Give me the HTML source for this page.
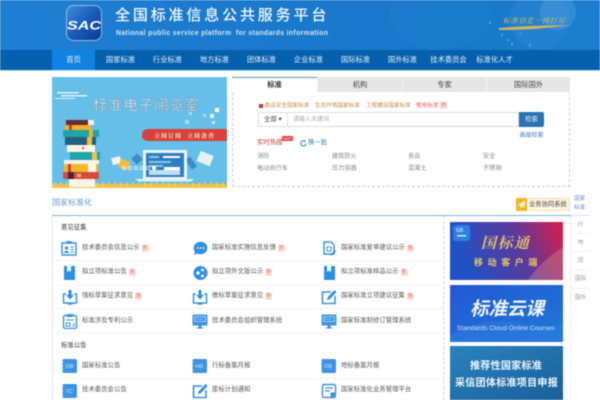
<!DOCTYPE html>
<html lang="zh"><head><meta charset="utf-8"><title>全国标准信息公共服务平台</title>
<style>
html,body{margin:0;padding:0;background:#fff}
body{width:600px;height:400px;overflow:hidden;position:relative;font-family:"Liberation Sans","Noto Sans CJK SC",sans-serif;color:#555}
#w{position:absolute;left:0;top:0;width:600px;height:400px;overflow:hidden;filter:blur(.42px)}
#w div,#w span,#w svg{position:absolute;white-space:nowrap}
.n{top:50px;height:20px;line-height:20px;font-size:7.3px;color:#e8f2fb;width:47px;text-align:center}
.tab{top:77px;height:15px;line-height:15px;text-align:center;font-size:7.3px;color:#444;background:#e6e6e6;border-left:1px solid #f4f4f4;box-sizing:border-box}
.t{font-size:6.4px;line-height:10px;color:#555}
.x{display:inline-block;position:static!important;width:7px;height:7px;line-height:7px;background:#fbdada;color:#e77;font-size:5px;text-align:center;margin-left:2px;vertical-align:0;font-style:normal}
.l{height:1px;background:#f1f1f1;left:53px;width:389px}
.h{font-size:6.2px;line-height:10px;color:#888}
.s{left:571px;width:19px;text-align:center;font-size:5.6px;color:#999;line-height:10px}
.sl{left:571px;width:19px;height:1px;background:#eee}
.i{width:16px;height:16px}
</style></head><body><div id="w">

<div style="left:0;top:0;width:600px;height:50px;background:linear-gradient(90deg,#1f7fd2 0%,#1b79cc 50%,#1878c8 75%,#1c7fce 100%)"></div>
<svg style="left:380px;top:0" width="220" height="50" viewBox="0 0 220 50">
<ellipse cx="60" cy="15" rx="50" ry="35" fill="#2585d4" opacity=".3"/>
<circle cx="160" cy="20" r="30" fill="#2a88d6" opacity=".5"/>
<circle cx="178" cy="12" r="18" fill="#5ea6e0" opacity=".35"/>
<g fill="#58d0f5"><circle cx="110" cy="23" r=".9"/><circle cx="122" cy="35" r=".9"/><circle cx="132" cy="44" r=".9"/><circle cx="150" cy="45" r=".9"/><circle cx="128" cy="40" r=".8"/><circle cx="140" cy="34" r=".7"/></g>
<path d="M119 28 Q150 25 190 25.5 L155 29 Q135 30 119 30Z" fill="#d2b35a"/>
<text x="123" y="23" font-size="7" font-style="italic" fill="#e4c25e" font-family="Liberation Serif,Noto Serif CJK SC,serif" letter-spacing=".8">标准信息一网打尽</text>
</svg>
<svg style="left:65px;top:4px" width="39" height="39" viewBox="0 0 39 39">
<defs><linearGradient id="lg" x1="0" y1="0" x2="1" y2="1"><stop offset="0" stop-color="#3f8fdc"/><stop offset=".5" stop-color="#1a5cb8"/><stop offset="1" stop-color="#0a3a96"/></linearGradient></defs>
<rect x="1.5" y="1.5" width="35" height="35" rx="7" fill="url(#lg)" stroke="#8dbce4" stroke-width="1"/>
<text x="2" y="25.5" font-size="12" font-weight="bold" font-style="italic" fill="#fff" font-family="Liberation Sans,sans-serif" textLength="34" lengthAdjust="spacingAndGlyphs">SAC</text>
</svg>
<div style="left:115px;top:6px;font-size:15px;line-height:20px;letter-spacing:2.85px;color:#f1f7fc;font-weight:500">全国标准信息公共服务平台</div>
<div style="left:116px;top:29px;font-size:6.9px;line-height:10px;font-weight:bold;color:#cfe4f6;letter-spacing:.34px">National public service platform&nbsp; for standards information</div>

<div style="left:0;top:50px;width:600px;height:20px;background:#0560ad"></div>
<div style="left:52px;top:50px;width:43px;height:20px;background:#0f83e2"></div>
<div class="n" style="left:50px">首页</div>
<div class="n" style="left:97px">国家标准</div>
<div class="n" style="left:144px">行业标准</div>
<div class="n" style="left:191px">地方标准</div>
<div class="n" style="left:238px">团体标准</div>
<div class="n" style="left:285px">企业标准</div>
<div class="n" style="left:332px">国际标准</div>
<div class="n" style="left:379px">国外标准</div>
<div class="n" style="left:425px">技术委员会</div>
<div class="n" style="left:471px">标准化人才</div>
<div style="left:0;top:70px;width:600px;height:1px;background:#b9daf2"></div>

<svg style="left:52px;top:77px" width="175" height="111" viewBox="0 0 175 111">
<rect width="175" height="111" fill="#66bfe9"/>
<g fill="#dff1fa"><rect x="5" y="15" width="22" height="1.5"/><rect x="9" y="18" width="26" height="1.5"/><rect x="3" y="21" width="20" height="1"/></g>
<text x="41" y="33" font-size="14.2" letter-spacing="1.1" fill="#eef7fb" stroke="#5f7f98" stroke-width=".35" font-family="Liberation Sans,Noto Sans CJK SC,sans-serif">标准电子阅览室</text>
<g fill="#a6dcf2"><rect x="133" y="43" width="4" height="4"/><rect x="137" y="35" width="3" height="3"/><rect x="151" y="37" width="3" height="3"/></g>
<rect x="158" y="37" width="4" height="4" fill="#e8f7fd"/><rect x="163" y="31" width="4" height="4" fill="#fff"/><rect x="160" y="44" width="3" height="3" fill="#c4e8f7"/>
<path d="M97 64 Q90 64 90 58 Q90 52 97 52 H175 V64Z" fill="#d9413c"/>
<text x="102" y="61" font-size="6" font-weight="bold" fill="#f9e8b8" letter-spacing="1" font-family="Liberation Serif,Noto Serif CJK SC,serif">立阅订阅 &nbsp;立阅备查</text>
<!-- books -->
<rect x="14" y="43" width="28" height="5" fill="#6d2a35"/><rect x="36" y="43" width="6" height="5" fill="#f3f0e6"/>
<rect x="13" y="48" width="26" height="5" fill="#f0b428"/><rect x="17" y="48" width="3" height="5" fill="#d63f38"/>
<rect x="11" y="53" width="36" height="7" fill="#1fa5a8"/><rect x="37" y="53" width="4" height="7" fill="#f0b428"/>
<rect x="13" y="60" width="31" height="8" fill="#255f80"/><rect x="35" y="60" width="5" height="8" fill="#f2bc36"/>
<rect x="15" y="68" width="28" height="7" fill="#fbf7e8"/><rect x="30" y="70" width="2" height="2" fill="#d63f38"/>
<rect x="18" y="75" width="30" height="8" fill="#1fa5a8"/><rect x="40" y="75" width="5" height="8" fill="#f0c040"/>
<rect x="12" y="83" width="35" height="4" fill="#f7f3e8"/>
<rect x="12" y="87" width="34" height="8" fill="#f4b72a"/><rect x="36" y="87" width="8" height="8" fill="#f8f4e6"/><rect x="16" y="87" width="3" height="8" fill="#d63f38"/>
<rect x="11" y="95" width="36" height="7" fill="#d84a3e"/><rect x="16" y="95" width="6" height="7" fill="#4a2433"/><rect x="25" y="97" width="4" height="3" fill="#f0c040"/>
<!-- floating -->
<g transform="rotate(-15 65 84)"><rect x="60" y="80" width="9" height="7" fill="#f1f5ee"/></g>
<g transform="rotate(20 72 88)"><rect x="67" y="83" width="10" height="9" fill="#efbd44"/></g>
<g transform="rotate(-40 85 82)"><rect x="81" y="78" width="8" height="8" fill="#3d88c9"/></g>
<g transform="rotate(-35 139 86)"><rect x="136" y="80" width="6" height="12" fill="#3d88c9"/></g>
<g transform="rotate(22 153 82)"><rect x="146" y="76" width="14" height="11" fill="#e6f2f2"/></g>
<!-- laptop -->
<rect x="91" y="73" width="44" height="29" rx="1" fill="#e8f5fb"/>
<rect x="94" y="76" width="38" height="24" fill="#2d7fbf"/>
<rect x="97" y="79" width="10" height="2" fill="#8dc6e8"/><rect x="111" y="79" width="17" height="2" fill="#fff"/>
<rect x="97" y="84" width="22" height="2" fill="#8dc6e8"/><rect x="97" y="88" width="14" height="2" fill="#8dc6e8"/>
<rect x="97" y="93" width="31" height="5" fill="#bfe0f2"/><rect x="112" y="90" width="16" height="3" fill="#fff"/>
<path d="M83 102 H142 L139 104.500 H87Z" fill="#dff0f8"/>
<g fill="none" stroke="#fff" stroke-width=".7"><circle cx="72" cy="91" r="1.6"/><circle cx="78" cy="91" r="1.6"/><circle cx="84" cy="91" r="1.6"/><circle cx="90" cy="91" r="1.6"/><circle cx="96" cy="91" r="1.6"/></g><circle cx="102" cy="91" r="2.2" fill="#fff"/>
<path d="M0 111V108l3-3 3 3 3-3 3 3 3-3 3 3 3-3 3 3 3-3 3 3 3-3 3 3 3-3 3 3 3-3 3 3 3-3 3 3 3-3 3 3 3-3 3 3 3-3 3 3 3-3 3 3 3-3 3 3 3-3 3 3 3-3 3 3 3-3 3 3 3-3 3 3 3-3 3 3 3-3 3 3 3-3 3 3 3-3 3 3 3-3 3 3 3-3 3 3 3-3 3 3 3-3 3 3 3-3 3 3 3-3 3 3 3-3 3 3 3-3 3 3V111Z" fill="#f3c34a"/>
<rect x="17" y="102" width="26" height="8" fill="#f8f4e6"/>
</svg>

<div style="left:232px;top:77px;width:338px;height:110px;box-sizing:border-box;border:1px dashed #ccc;border-top:0"></div>
<div style="left:232px;top:77px;width:85px;height:1px;background:#5f8fb0"></div>
<div class="tab" style="left:232px;width:85px;background:#fff;border:0;color:#333;font-weight:bold;top:78px;height:14px;line-height:13px">标准</div>
<div class="tab" style="left:317px;width:85px">机构</div>
<div class="tab" style="left:402px;width:84px">专家</div>
<div class="tab" style="left:486px;width:84px">国际国外</div>

<div style="left:259px;top:104px;width:3.5px;height:3.5px;background:#c8313a"></div>
<div style="left:264.500px;top:101px;font-size:5.6px;line-height:10px;color:#c98a3f">食品安全国家标准</div>
<div style="left:315px;top:101px;font-size:5.6px;line-height:10px;color:#c98a3f">生态环境国家标准</div>
<div style="left:366px;top:101px;font-size:5.6px;line-height:10px;color:#c98a3f">工程建设国家标准</div>
<div style="left:416px;top:101px;font-size:5.6px;line-height:10px;color:#e2645f">使用标准</div>
<div style="left:440px;top:102px;width:7px;height:7px;line-height:7px;background:#fbdada;color:#e77;font-size:5px;text-align:center">新</div>

<div style="left:258px;top:112px;width:261px;height:15px;box-sizing:border-box;border:1px solid #ddd;border-radius:2px 0 0 2px"></div>
<div style="left:287px;top:113px;width:1px;height:13px;background:#ddd"></div>
<div style="left:264px;top:115px;font-size:6.4px;line-height:10px;color:#444">全部 ▾</div>
<div style="left:293px;top:115px;font-size:6px;line-height:10px;color:#aaa">请输入关键词</div>
<div style="left:519px;top:112px;width:25px;height:15px;line-height:15px;text-align:center;background:#2b72b0;border-radius:0 2px 2px 0;color:#e8f2fb;font-size:6.4px">检索</div>
<div style="left:519px;top:131px;width:25px;text-align:center;font-size:6px;line-height:10px;color:#3b7ab3">高级检索</div>

<div style="left:257px;top:138px;font-size:6.4px;line-height:10px;color:#c0453f">实时热搜</div>
<div style="left:282px;top:136px;width:11px;height:5px;line-height:5px;background:#ea3c48;color:#fff;font-size:4px;text-align:center">HOT</div>
<svg style="left:300px;top:140px" width="7" height="7" viewBox="0 0 7 7"><path d="M6 3.5A2.6 2.6 0 1 1 4.8 1.2" fill="none" stroke="#3a7fc0" stroke-width="1"/><path d="M4 0L6 1.4 4 2.4Z" fill="#3a7fc0"/></svg>
<div style="left:308px;top:138px;font-size:6.4px;line-height:10px;color:#3b7ab3">换一批</div>
<div class="h" style="left:257px;top:152px">消防</div>
<div class="h" style="left:332px;top:152px">建筑防火</div>
<div class="h" style="left:408px;top:152px">食品</div>
<div class="h" style="left:483px;top:152px">安全</div>
<div class="h" style="left:257px;top:164px">电动自行车</div>
<div class="h" style="left:332px;top:164px">压力容器</div>
<div class="h" style="left:408px;top:164px">混凝土</div>
<div class="h" style="left:483px;top:164px">不锈钢</div>

<div style="left:52px;top:198px;font-size:8px;line-height:10px;color:#6a9cc6">国家标准化</div>
<div style="left:516px;top:198px;width:54px;height:13px;box-sizing:border-box;border:1px solid #f6dfae;background:#fdf5e4;border-radius:1px"></div>
<div style="left:516px;top:198px;width:11px;height:13px;background:#f7b81f"></div>
<svg style="left:517px;top:200px" width="9" height="9" viewBox="0 0 9 9"><path d="M8 1L1 4.5 3.2 5.5 3.7 8 5 6.3 7 7Z" fill="#fff"/></svg>
<div style="left:529px;top:200px;font-size:6.3px;line-height:10px;color:#444">业务协同系统</div>

<div style="left:574px;top:195px;font-size:5.6px;line-height:9px;color:#6a8fd0;white-space:normal;width:12px">国家标准</div>
<div class="sl" style="top:215px;background:#e3e3e3"></div>
<div class="s" style="top:220px">行</div><div class="sl" style="top:233px"></div>
<div class="s" style="top:238px">地</div><div class="sl" style="top:251px"></div>
<div class="s" style="top:256px">团</div><div class="sl" style="top:270px"></div>
<div class="s" style="top:274px">国际</div><div class="sl" style="top:288px"></div>
<div class="s" style="top:293px">国外</div>
<div style="left:570px;top:215px;width:1px;height:185px;background:#ececec"></div>

<div style="left:52px;top:215px;width:519px;height:1px;background:#7fb0d4"></div>
<div style="left:52px;top:216px;width:1px;height:184px;background:#eaeaea"></div>
<div style="left:443px;top:216px;width:0;height:184px;border-left:1px dashed #d6d6d6"></div>

<div style="left:61px;top:223px;font-size:6.4px;line-height:10px;color:#333">意见征集</div>
<div class="l" style="top:260px"></div><div class="l" style="top:285px"></div><div class="l" style="top:308px"></div><div class="l" style="top:333px"></div><div class="l" style="top:378px"></div>

<!-- row 1 -->
<svg class="i" style="left:61px;top:240px" viewBox="0 0 16 16"><rect x="1" y="3" width="14" height="12" fill="#fff" stroke="#3c93e2" stroke-width="1.5"/><rect x="5.500" y="1" width="5" height="3" fill="#3c93e2"/><circle cx="5.500" cy="8" r="1.7" fill="#3c93e2"/><path d="M3 13c0-3 5-3 5 0Z" fill="#3c93e2"/><path d="M9.500 7H13M9.500 9.500H13M9.500 12H13" stroke="#3c93e2"/></svg>
<div class="t" style="left:82px;top:243px">技术委员会信息公示<i class="x">新</i></div>
<svg class="i" style="left:192px;top:240px" viewBox="0 0 16 16"><ellipse cx="8.500" cy="8" rx="6.800" ry="6.300" fill="#2f8fe6"/><path d="M3 11L2 15 6 13Z" fill="#2f8fe6"/><circle cx="5.500" cy="8" r=".9" fill="#fff"/><circle cx="8.500" cy="8" r=".9" fill="#fff"/><circle cx="11.500" cy="8" r=".9" fill="#fff"/></svg>
<div class="t" style="left:212px;top:243px">国家标准实施信息反馈<i class="x">新</i></div>
<svg class="i" style="left:321px;top:240px" viewBox="0 0 16 16"><path d="M3 2H10L13 5V14H3Z" fill="#fff" stroke="#3c93e2" stroke-width="1.5"/><path d="M6 7H10V11H6Z" fill="none" stroke="#3c93e2"/><path d="M9 15L14 10 15 11.500 11 15.500Z" fill="#3c93e2"/></svg>
<div class="t" style="left:341px;top:243px">国家标准复审建议公示<i class="x">新</i></div>
<!-- row 2 -->
<svg class="i" style="left:61px;top:265px" viewBox="0 0 16 16"><path d="M3 1H6V7L8 5.500 10 7V1H14V15H3Z" fill="#2f8fe6"/></svg>
<div class="t" style="left:82px;top:267px">拟立项标准公告<i class="x">新</i></div>
<svg class="i" style="left:192px;top:265px" viewBox="0 0 16 16"><circle cx="8.500" cy="8" r="7" fill="#2f8fe6"/><circle cx="6" cy="8" r="1.7" fill="#fff"/><circle cx="10.500" cy="5" r="1.4" fill="#fff"/><circle cx="10.500" cy="11" r="1.4" fill="#fff"/></svg>
<div class="t" style="left:212px;top:267px">拟立项外文版公示<i class="x">新</i></div>
<svg class="i" style="left:321px;top:265px" viewBox="0 0 16 16"><path d="M3 1H6V7L8 5.500 10 7V1H14V15H3Z" fill="#2f8fe6"/></svg>
<div class="t" style="left:341px;top:267px">拟立项标准样品公示<i class="x">新</i></div>
<!-- row 3 -->
<svg class="i" style="left:62px;top:289px" viewBox="0 0 16 16"><path d="M4 5H1.500V14H14.500V5H12" fill="none" stroke="#3c93e2" stroke-width="1.5"/><path d="M6.500 1H9.500V6H12L8 10.500 4 6H6.500Z" fill="#2f8fe6"/><rect x="5.500" y="14.500" width="5" height="1.200" fill="#3c93e2"/></svg>
<div class="t" style="left:82px;top:291px">强标草案征求意见<i class="x">新</i></div>
<svg class="i" style="left:192px;top:289px" viewBox="0 0 16 16"><path d="M4 5H1.500V14H14.500V5H12" fill="none" stroke="#3c93e2" stroke-width="1.5"/><path d="M6.500 1H9.500V6H12L8 10.500 4 6H6.500Z" fill="#2f8fe6"/><rect x="5.500" y="14.500" width="5" height="1.200" fill="#3c93e2"/></svg>
<div class="t" style="left:212px;top:291px">推标草案征求意见<i class="x">新</i></div>
<svg class="i" style="left:321px;top:289px" viewBox="0 0 16 16"><path d="M10 3H1.500V14.500H14V7" fill="none" stroke="#3c93e2" stroke-width="1.6"/><path d="M13.500 1L15.500 3 8.500 10.500 6 11 6.500 8.500Z" fill="#2f8fe6"/></svg>
<div class="t" style="left:341px;top:291px">国家标准立项建议征集<i class="x">新</i></div>
<!-- row 4 -->
<svg class="i" style="left:62px;top:313px" viewBox="0 0 16 16"><rect x="1.500" y="2.500" width="13" height="13" rx="1.500" fill="#fff" stroke="#3c93e2" stroke-width="1.4"/><rect x="5" y="1" width="6" height="3" fill="#3c93e2"/><path d="M4 7H12M4 10H8V13H4ZM10 13H12V10" fill="none" stroke="#3c93e2"/></svg>
<div class="t" style="left:82px;top:316px">标准涉及专利公示</div>
<svg class="i" style="left:192px;top:313px" viewBox="0 0 16 16"><rect x=".5" y="1.500" width="15" height="11" rx="1" fill="#3c93e2"/><rect x="2.500" y="3.500" width="11" height="5" fill="none" stroke="#cfe5fa" stroke-width=".7"/><path d="M4 6H12" stroke="#cfe5fa" stroke-dasharray="1 1"/><rect x="6.500" y="12.500" width="3" height="2" fill="#3c93e2"/><rect x="4.500" y="14.500" width="7" height="1" fill="#3c93e2"/></svg>
<div class="t" style="left:212px;top:316px">技术委员会组织管理系统</div>
<svg class="i" style="left:321px;top:313px" viewBox="0 0 16 16"><rect x=".5" y="1.500" width="15" height="11" rx="1" fill="#3c93e2"/><rect x="2.500" y="3.500" width="11" height="5" fill="none" stroke="#cfe5fa" stroke-width=".7"/><path d="M4 6H12" stroke="#cfe5fa" stroke-dasharray="1 1"/><rect x="6.500" y="12.500" width="3" height="2" fill="#3c93e2"/><rect x="4.500" y="14.500" width="7" height="1" fill="#3c93e2"/></svg>
<div class="t" style="left:341px;top:316px">国家标准制修订管理系统</div>

<div style="left:61px;top:341px;font-size:6.4px;line-height:10px;color:#333">标准公告</div>
<!-- row 5 -->
<svg class="i" style="left:62px;top:358px" viewBox="0 0 16 16"><rect x=".5" y="1" width="14.500" height="14" rx="1.500" fill="#3c93e2"/><path d="M0 4H2M0 8H2M0 12H2" stroke="#cfe5fa" stroke-width=".6"/><text x="3.500" y="10" font-size="5.500" fill="#d8ebfb" font-family="Liberation Sans,sans-serif">GB</text></svg>
<div class="t" style="left:82px;top:361px">国家标准公告</div>
<svg class="i" style="left:192px;top:358px" viewBox="0 0 16 16"><rect x=".5" y="1" width="14.500" height="14" rx="1.500" fill="#3c93e2"/><path d="M0 4H2M0 8H2M0 12H2" stroke="#cfe5fa" stroke-width=".6"/><text x="3.500" y="10" font-size="5.500" fill="#d8ebfb" font-family="Liberation Sans,sans-serif">HB</text></svg>
<div class="t" style="left:212px;top:361px">行标备案月报</div>
<svg class="i" style="left:321px;top:358px" viewBox="0 0 16 16"><rect x=".5" y="1" width="14.500" height="14" rx="1.500" fill="#3c93e2"/><path d="M0 4H2M0 8H2M0 12H2" stroke="#cfe5fa" stroke-width=".6"/><text x="3.500" y="10" font-size="5.500" fill="#d8ebfb" font-family="Liberation Sans,sans-serif">DB</text></svg>
<div class="t" style="left:341px;top:361px">地标备案月报</div>
<!-- row 6 -->
<svg class="i" style="left:62px;top:383px" viewBox="0 0 16 16"><rect x=".5" y="1" width="14.500" height="14" rx="1.500" fill="#3c93e2"/><path d="M0 4H2M0 8H2M0 12H2" stroke="#cfe5fa" stroke-width=".6"/><text x="3.500" y="10" font-size="5.500" fill="#d8ebfb" font-family="Liberation Sans,sans-serif">TC</text></svg>
<div class="t" style="left:82px;top:385px">技术委员会公告</div>
<svg class="i" style="left:192px;top:383px" viewBox="0 0 16 16"><path d="M10 3H1.500V14.500H14V7" fill="none" stroke="#3c93e2" stroke-width="1.6"/><path d="M13.500 1L15.500 3 8.500 10.500 6 11 6.500 8.500Z" fill="#2f8fe6"/></svg>
<div class="t" style="left:212px;top:385px">废标计划通知</div>
<svg class="i" style="left:321px;top:383px" viewBox="0 0 16 16"><rect x="1.500" y="1.500" width="13" height="13" rx="1.500" fill="#fff" stroke="#3c93e2" stroke-width="1.4"/><path d="M4 5H12M4 8H9" stroke="#3c93e2" stroke-width="1.200"/><rect x="9.500" y="9.500" width="5" height="5" fill="#3c93e2"/></svg>
<div class="t" style="left:341px;top:385px">国家标准化业务管理平台</div>

<!-- right banners -->
<svg style="left:450px;top:222px" width="113" height="58" viewBox="0 0 113 58">
<defs><linearGradient id="g1" x1="0" x2="1" y1=".2" y2="0"><stop offset="0" stop-color="#1f52c6"/><stop offset=".55" stop-color="#5a3a9c"/><stop offset="1" stop-color="#dc1c48"/></linearGradient></defs>
<rect width="113" height="58" fill="url(#g1)"/><path d="M113 25Q90 40 78 58H113Z" fill="#c8818e" opacity=".45"/>
<rect x="3" y="3" width="17" height="16" rx="3" fill="#2c80e4"/><text x="6" y="10" font-size="5" fill="#fff" font-family="Liberation Sans,sans-serif">GB</text><rect x="7" y="13" width="9" height="1.500" fill="#cfe5fa"/>
<text x="31" y="26" font-size="15" font-style="italic" fill="#e8c06a" letter-spacing="1.500" font-family="Liberation Serif,Noto Serif CJK SC,serif" font-weight="bold">国标通</text>
<text x="24" y="43.500" font-size="9" font-weight="bold" fill="#ecc468" letter-spacing="4.600" font-family="Liberation Sans,Noto Sans CJK SC,sans-serif">移动客户端</text>
</svg>
<svg style="left:450px;top:285px" width="113" height="57" viewBox="0 0 113 57">
<defs><linearGradient id="g2" x1="0" x2="1" y1="0" y2="1"><stop offset="0" stop-color="#2458d4"/><stop offset="1" stop-color="#1e78da"/></linearGradient></defs>
<rect width="113" height="57" fill="url(#g2)"/><path d="M0 50Q40 30 70 38T113 38V57H0Z" fill="#2f7edc" opacity=".5"/>
<text x="20" y="30" font-size="18.500" font-style="italic" font-weight="bold" fill="#eef5fd" font-family="Liberation Sans,Noto Sans CJK SC,sans-serif">标准云课</text>
<text x="7" y="45" font-size="6.700" fill="#cfe2f8" font-family="Liberation Sans,sans-serif">Standards Cloud Online Courses</text>
</svg>
<svg style="left:450px;top:346px" width="113" height="54" viewBox="0 0 113 54">
<defs><linearGradient id="g3" x1="0" x2="1" y1="0" y2="1"><stop offset="0" stop-color="#2a83bd"/><stop offset="1" stop-color="#1a5f9c"/></linearGradient></defs>
<rect width="113" height="54" fill="url(#g3)"/>
<text x="20" y="23" font-size="10.100" font-weight="bold" fill="#eef6fb" letter-spacing=".2" font-family="Liberation Sans,Noto Sans CJK SC,sans-serif">推荐性国家标准</text>
<text x="5" y="40" font-size="10" font-weight="bold" fill="#eef6fb" letter-spacing=".3" font-family="Liberation Sans,Noto Sans CJK SC,sans-serif">采信团体标准项目申报</text>
</svg>
</div></body></html>
